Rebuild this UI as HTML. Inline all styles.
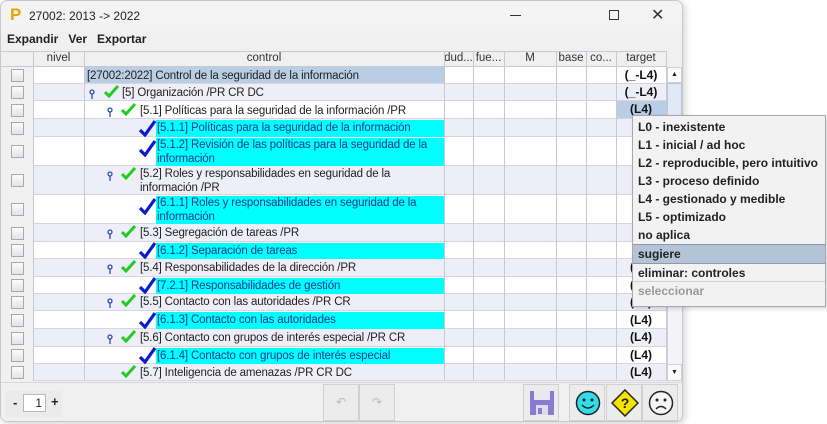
<!DOCTYPE html>
<html><head><meta charset="utf-8">
<style>
*{margin:0;padding:0;box-sizing:border-box}
body{width:827px;height:424px;background:#fff;position:relative;overflow:hidden;font-family:"Liberation Sans",Arial,sans-serif;font-size:12px;color:#222}
.a{position:absolute}
#win{left:0;top:0;width:683px;height:422px;border:1px solid #c8c8c8;border-radius:7px;background:#f0f0f0;overflow:hidden;box-shadow:2px 2px 8px rgba(0,0,0,.18)}
.vl{position:absolute;top:50px;width:1px;height:330px;background:#c9c9d3}
.hd{position:absolute;top:50px;height:16px;font-size:11.5px;color:#333;text-align:center;line-height:15px}
.row{position:absolute;left:32px;width:633px;border-bottom:1px solid #d6d6e0}
.w{background:#fff}.l{background:#eeeef9}
.cb{position:absolute;left:10px;width:13px;height:13px;border:1px solid #a8a8b0;background:linear-gradient(#fbfbfb,#e3e3e8)}
.t{position:absolute;line-height:14px;white-space:nowrap;font-size:11.5px;letter-spacing:-0.15px}
.cy{position:absolute;left:155px;width:288px;background:#00ffff;line-height:14px;padding-left:1px;color:#1a3a8a;white-space:nowrap;overflow:hidden;font-size:11.5px;letter-spacing:-0.15px}
.tg{position:absolute;left:615px;width:50px;text-align:center;font-weight:bold;font-size:12px;line-height:17px;color:#111}
.pin{position:absolute;width:6px;height:10px}
.gk{position:absolute;width:15px;height:13px}
.bk{position:absolute;width:17px;height:17px}
.mi{height:18px;line-height:18px;padding-left:5px;font-weight:bold;font-size:12px;color:#222}
.btn{position:absolute;top:383px;height:37px;border:1px solid #d0d0d0;background:#ececec}
</style></head><body>
<div id="win" class="a">
<div class="a" style="left:0;top:0;width:683px;height:30px;background:#f3f3f3"></div>
<div class="a" style="left:9px;top:5px;font-size:17px;font-weight:bold;color:#e8a400;line-height:18px">P</div>
<div class="a" style="left:28px;top:8px;font-size:12px;color:#222">27002: 2013 -&gt; 2022</div>
<div class="a" style="left:509px;top:14px;width:11px;height:1px;background:#333"></div>
<div class="a" style="left:608px;top:9px;width:10px;height:10px;border:1px solid #333"></div>
<div class="a" style="left:650px;top:4px;font-size:16px;color:#333">✕</div>
<div class="a" style="left:0;top:30px;width:683px;height:19px;background:#f0f0f0"></div>
<div class="a" style="left:6px;top:31px;font-weight:bold;font-size:12px;color:#222">Expandir&nbsp;&nbsp;&nbsp;Ver&nbsp;&nbsp;&nbsp;Exportar</div>
<div class="a" style="left:0;top:50px;width:665px;height:330px;background:#fff"></div>
<div class="a" style="left:0;top:50px;width:665px;height:16px;background:#f0f0f0;border-bottom:1px solid #c9c9d3;border-top:1px solid #c9c9d3"></div>
<div class="a" style="left:0;top:66px;width:32px;height:314px;background:#f0f0f0"></div>
<div class="hd" style="left:32px;width:51px">nivel</div>
<div class="hd" style="left:83px;width:360px">control</div>
<div class="hd" style="left:443px;width:29px">dud...</div>
<div class="hd" style="left:472px;width:31px">fue...</div>
<div class="hd" style="left:503px;width:52px">M</div>
<div class="hd" style="left:555px;width:30px">base</div>
<div class="hd" style="left:585px;width:30px">co...</div>
<div class="hd" style="left:615px;width:50px">target</div>

<div class="row w" style="top:66px;height:17px"></div>
<div class="a" style="left:83px;top:66px;width:360px;height:16px;background:#b9cde5"></div>
<div class="row l" style="top:83px;height:17px"></div>
<div class="row w" style="top:100px;height:18px"></div>
<div class="a" style="left:615px;top:100px;width:50px;height:17px;background:#b9cde5"></div>
<div class="row l" style="top:118px;height:18px"></div>
<div class="row w" style="top:136px;height:29px"></div>
<div class="row l" style="top:165px;height:29px"></div>
<div class="row w" style="top:194px;height:29px"></div>
<div class="row l" style="top:223px;height:18px"></div>
<div class="row w" style="top:241px;height:17px"></div>
<div class="row l" style="top:258px;height:18px"></div>
<div class="row w" style="top:276px;height:17px"></div>
<div class="row l" style="top:293px;height:17px"></div>
<div class="row w" style="top:310px;height:18px"></div>
<div class="row l" style="top:328px;height:18px"></div>
<div class="row w" style="top:346px;height:17px"></div>
<div class="row l" style="top:363px;height:17px"></div>

<div class="vl" style="left:32px"></div><div class="vl" style="left:83px"></div><div class="vl" style="left:443px"></div><div class="vl" style="left:472px"></div><div class="vl" style="left:503px"></div><div class="vl" style="left:555px"></div><div class="vl" style="left:585px"></div><div class="vl" style="left:615px"></div><div class="vl" style="left:665px"></div>

<div class="cb" style="top:68px"></div><div class="cb" style="top:85px"></div><div class="cb" style="top:103px"></div><div class="cb" style="top:121px"></div><div class="cb" style="top:144px"></div><div class="cb" style="top:173px"></div><div class="cb" style="top:202px"></div><div class="cb" style="top:226px"></div><div class="cb" style="top:243px"></div><div class="cb" style="top:261px"></div><div class="cb" style="top:278px"></div><div class="cb" style="top:295px"></div><div class="cb" style="top:313px"></div><div class="cb" style="top:331px"></div><div class="cb" style="top:348px"></div><div class="cb" style="top:365px"></div>

<div class="t" style="left:86px;top:68px">[27002:2022] Control de la seguridad de la información</div>

<svg class="pin" style="left:88px;top:88px" viewBox="0 0 6 10"><circle cx="3" cy="3" r="2" fill="none" stroke="#2a4fb0" stroke-width="1.3"/><line x1="3" y1="5" x2="3" y2="10" stroke="#2a4fb0" stroke-width="1.3"/></svg>
<svg class="gk" style="left:103px;top:84px" viewBox="0 0 15 13"><path d="M1 7 L5 11 L14 1" fill="none" stroke="#22cc22" stroke-width="3"/></svg>
<div class="t" style="left:121px;top:85px">[5] Organización /PR CR DC</div>

<svg class="pin" style="left:106px;top:106px" viewBox="0 0 6 10"><circle cx="3" cy="3" r="2" fill="none" stroke="#2a4fb0" stroke-width="1.3"/><line x1="3" y1="5" x2="3" y2="10" stroke="#2a4fb0" stroke-width="1.3"/></svg>
<svg class="gk" style="left:120px;top:102px" viewBox="0 0 15 13"><path d="M1 7 L5 11 L14 1" fill="none" stroke="#22cc22" stroke-width="3"/></svg>
<div class="t" style="left:139px;top:103px">[5.1] Políticas para la seguridad de la información /PR</div>

<svg class="bk" style="left:138px;top:119px" viewBox="0 0 17 17"><path d="M1 10 L6 15 L16 1" fill="none" stroke="#0a1ad0" stroke-width="3.2"/></svg>
<div class="cy" style="top:119px;height:17px;line-height:17px">[5.1.1] Políticas para la seguridad de la información</div>

<svg class="bk" style="left:138px;top:139px" viewBox="0 0 17 17"><path d="M1 10 L6 15 L16 1" fill="none" stroke="#0a1ad0" stroke-width="3.2"/></svg>
<div class="cy" style="top:137px;height:28px">[5.1.2] Revisión de las políticas para la seguridad de la<br>información</div>

<svg class="pin" style="left:106px;top:170px" viewBox="0 0 6 10"><circle cx="3" cy="3" r="2" fill="none" stroke="#2a4fb0" stroke-width="1.3"/><line x1="3" y1="5" x2="3" y2="10" stroke="#2a4fb0" stroke-width="1.3"/></svg>
<svg class="gk" style="left:120px;top:166px" viewBox="0 0 15 13"><path d="M1 7 L5 11 L14 1" fill="none" stroke="#22cc22" stroke-width="3"/></svg>
<div class="t" style="left:139px;top:166px">[5.2] Roles y responsabilidades en seguridad de la<br>información /PR</div>

<svg class="bk" style="left:138px;top:197px" viewBox="0 0 17 17"><path d="M1 10 L6 15 L16 1" fill="none" stroke="#0a1ad0" stroke-width="3.2"/></svg>
<div class="cy" style="top:195px;height:28px">[6.1.1] Roles y responsabilidades en seguridad de la<br>información</div>

<svg class="pin" style="left:106px;top:228px" viewBox="0 0 6 10"><circle cx="3" cy="3" r="2" fill="none" stroke="#2a4fb0" stroke-width="1.3"/><line x1="3" y1="5" x2="3" y2="10" stroke="#2a4fb0" stroke-width="1.3"/></svg>
<svg class="gk" style="left:120px;top:224px" viewBox="0 0 15 13"><path d="M1 7 L5 11 L14 1" fill="none" stroke="#22cc22" stroke-width="3"/></svg>
<div class="t" style="left:139px;top:225px">[5.3] Segregación de tareas /PR</div>

<svg class="bk" style="left:138px;top:241px" viewBox="0 0 17 17"><path d="M1 10 L6 15 L16 1" fill="none" stroke="#0a1ad0" stroke-width="3.2"/></svg>
<div class="cy" style="top:242px;height:16px;line-height:16px">[6.1.2] Separación de tareas</div>

<svg class="pin" style="left:106px;top:263px" viewBox="0 0 6 10"><circle cx="3" cy="3" r="2" fill="none" stroke="#2a4fb0" stroke-width="1.3"/><line x1="3" y1="5" x2="3" y2="10" stroke="#2a4fb0" stroke-width="1.3"/></svg>
<svg class="gk" style="left:120px;top:259px" viewBox="0 0 15 13"><path d="M1 7 L5 11 L14 1" fill="none" stroke="#22cc22" stroke-width="3"/></svg>
<div class="t" style="left:139px;top:260px">[5.4] Responsabilidades de la dirección /PR</div>

<svg class="bk" style="left:138px;top:276px" viewBox="0 0 17 17"><path d="M1 10 L6 15 L16 1" fill="none" stroke="#0a1ad0" stroke-width="3.2"/></svg>
<div class="cy" style="top:277px;height:16px;line-height:16px">[7.2.1] Responsabilidades de gestión</div>

<svg class="pin" style="left:106px;top:297px" viewBox="0 0 6 10"><circle cx="3" cy="3" r="2" fill="none" stroke="#2a4fb0" stroke-width="1.3"/><line x1="3" y1="5" x2="3" y2="10" stroke="#2a4fb0" stroke-width="1.3"/></svg>
<svg class="gk" style="left:120px;top:293px" viewBox="0 0 15 13"><path d="M1 7 L5 11 L14 1" fill="none" stroke="#22cc22" stroke-width="3"/></svg>
<div class="t" style="left:139px;top:294px">[5.5] Contacto con las autoridades /PR CR</div>

<svg class="bk" style="left:138px;top:311px" viewBox="0 0 17 17"><path d="M1 10 L6 15 L16 1" fill="none" stroke="#0a1ad0" stroke-width="3.2"/></svg>
<div class="cy" style="top:311px;height:17px;line-height:17px">[6.1.3] Contacto con las autoridades</div>

<svg class="pin" style="left:106px;top:333px" viewBox="0 0 6 10"><circle cx="3" cy="3" r="2" fill="none" stroke="#2a4fb0" stroke-width="1.3"/><line x1="3" y1="5" x2="3" y2="10" stroke="#2a4fb0" stroke-width="1.3"/></svg>
<svg class="gk" style="left:120px;top:329px" viewBox="0 0 15 13"><path d="M1 7 L5 11 L14 1" fill="none" stroke="#22cc22" stroke-width="3"/></svg>
<div class="t" style="left:139px;top:330px">[5.6] Contacto con grupos de interés especial /PR CR</div>

<svg class="bk" style="left:138px;top:346px" viewBox="0 0 17 17"><path d="M1 10 L6 15 L16 1" fill="none" stroke="#0a1ad0" stroke-width="3.2"/></svg>
<div class="cy" style="top:347px;height:16px;line-height:16px">[6.1.4] Contacto con grupos de interés especial</div>

<svg class="gk" style="left:120px;top:364px" viewBox="0 0 15 13"><path d="M1 7 L5 11 L14 1" fill="none" stroke="#22cc22" stroke-width="3"/></svg>
<div class="t" style="left:139px;top:365px">[5.7] Inteligencia de amenazas /PR CR DC</div>

<div class="tg" style="top:66px">(_-L4)</div>
<div class="tg" style="top:83px">(_-L4)</div>
<div class="tg" style="top:100px">(L4)</div>
<div class="tg" style="top:258px">(L4)</div>
<div class="tg" style="top:276px">(L4)</div>
<div class="tg" style="top:293px">(L4)</div>
<div class="tg" style="top:311px">(L4)</div>
<div class="tg" style="top:328px">(L4)</div>
<div class="tg" style="top:346px">(L4)</div>
<div class="tg" style="top:363px">(L4)</div>

<div class="a" style="left:666px;top:66px;width:15px;height:314px;background:#f4f4f8;border-left:1px solid #d0d0d8"></div>
<div class="a" style="left:666px;top:66px;width:15px;height:16px;background:#fafafa;border:1px solid #d0d0d8;text-align:center;font-size:7px;line-height:14px">▲</div>
<div class="a" style="left:666px;top:82px;width:15px;height:45px;background:#e2e8f4;border:1px solid #b8c4dc"></div>
<div class="a" style="left:666px;top:363px;width:15px;height:17px;background:#fafafa;border:1px solid #d0d0d8;text-align:center;font-size:7px;line-height:15px">▼</div>

<div class="a" style="left:0;top:381px;width:683px;height:41px;background:#f0f0f0;border-top:1px solid #d8d8d8"></div>
<div class="a" style="left:5px;top:390px;width:56px;height:26px;background:#ebebeb"></div>
<div class="a" style="left:12px;top:394px;font-weight:bold;font-size:13px">-</div>
<div class="a" style="left:22px;top:393px;width:23px;height:18px;background:#fff;border:1px solid #b8b8b8;text-align:right;padding-right:3px;line-height:16px">1</div>
<div class="a" style="left:50px;top:393px;font-weight:bold;font-size:13px">+</div>
<div class="btn" style="left:322px;width:36px;color:#bbb;text-align:center;line-height:35px;font-size:12px">↶</div>
<div class="btn" style="left:358px;width:36px;color:#bbb;text-align:center;line-height:35px;font-size:12px">↷</div>
<div class="btn" style="left:522px;width:36px"><svg style="position:absolute;left:5px;top:5px" width="26" height="26" viewBox="0 0 26 26"><rect x="1" y="1" width="24" height="24" fill="#8a7ad0"/><rect x="5" y="1" width="16" height="9" fill="#e8e8f4"/><rect x="7" y="15" width="12" height="10" fill="#dcdcec"/><rect x="9" y="18" width="4" height="6" fill="#8a7ad0"/></svg></div>
<div class="btn" style="left:568px;width:36px"><svg style="position:absolute;left:5px;top:5px" width="26" height="26" viewBox="0 0 26 26"><circle cx="13" cy="13" r="11.5" fill="#33dde8" stroke="#222" stroke-width="1.5"/><circle cx="9" cy="10" r="1.5" fill="#222"/><circle cx="17" cy="10" r="1.5" fill="#222"/><path d="M7 15 Q13 21 19 15" fill="none" stroke="#222" stroke-width="1.5"/></svg></div>
<div class="btn" style="left:605px;width:36px"><svg style="position:absolute;left:4px;top:4px" width="28" height="28" viewBox="0 0 28 28"><path d="M14 1 L27 14 L14 27 L1 14 Z" fill="#f4e400" stroke="#222" stroke-width="1.5"/><text x="14" y="19" font-family="Liberation Sans" font-weight="bold" font-size="14" text-anchor="middle" fill="#222">?</text></svg></div>
<div class="btn" style="left:641px;width:36px"><svg style="position:absolute;left:5px;top:5px" width="26" height="26" viewBox="0 0 26 26"><circle cx="13" cy="13" r="11.5" fill="#f4f4f4" stroke="#222" stroke-width="1.5"/><circle cx="9" cy="10" r="1.5" fill="#222"/><circle cx="17" cy="10" r="1.5" fill="#222"/><path d="M8 19 Q13 14 18 19" fill="none" stroke="#222" stroke-width="1.5"/></svg></div>
</div>

<div class="a" style="left:632px;top:115px;width:194px;height:192px;background:#f2f2f2;border:1px solid #a8a8b0;box-shadow:2px 2px 4px rgba(0,0,0,.15);padding-top:2px">
<div class="mi">L0 - inexistente</div>
<div class="mi">L1 - inicial / ad hoc</div>
<div class="mi">L2 - reproducible, pero intuitivo</div>
<div class="mi">L3 - proceso definido</div>
<div class="mi">L4 - gestionado y medible</div>
<div class="mi">L5 - optimizado</div>
<div class="mi">no aplica</div>
<div class="mi" style="background:#b4c3d6;border-top:1px solid #8a9ab0;border-bottom:1px solid #8a9ab0;height:20px">sugiere</div>
<div class="mi" style="border-bottom:1px solid #d0d0d0">eliminar: controles</div>
<div class="mi" style="color:#9a9a9a">seleccionar</div>
</div>
</body></html>
